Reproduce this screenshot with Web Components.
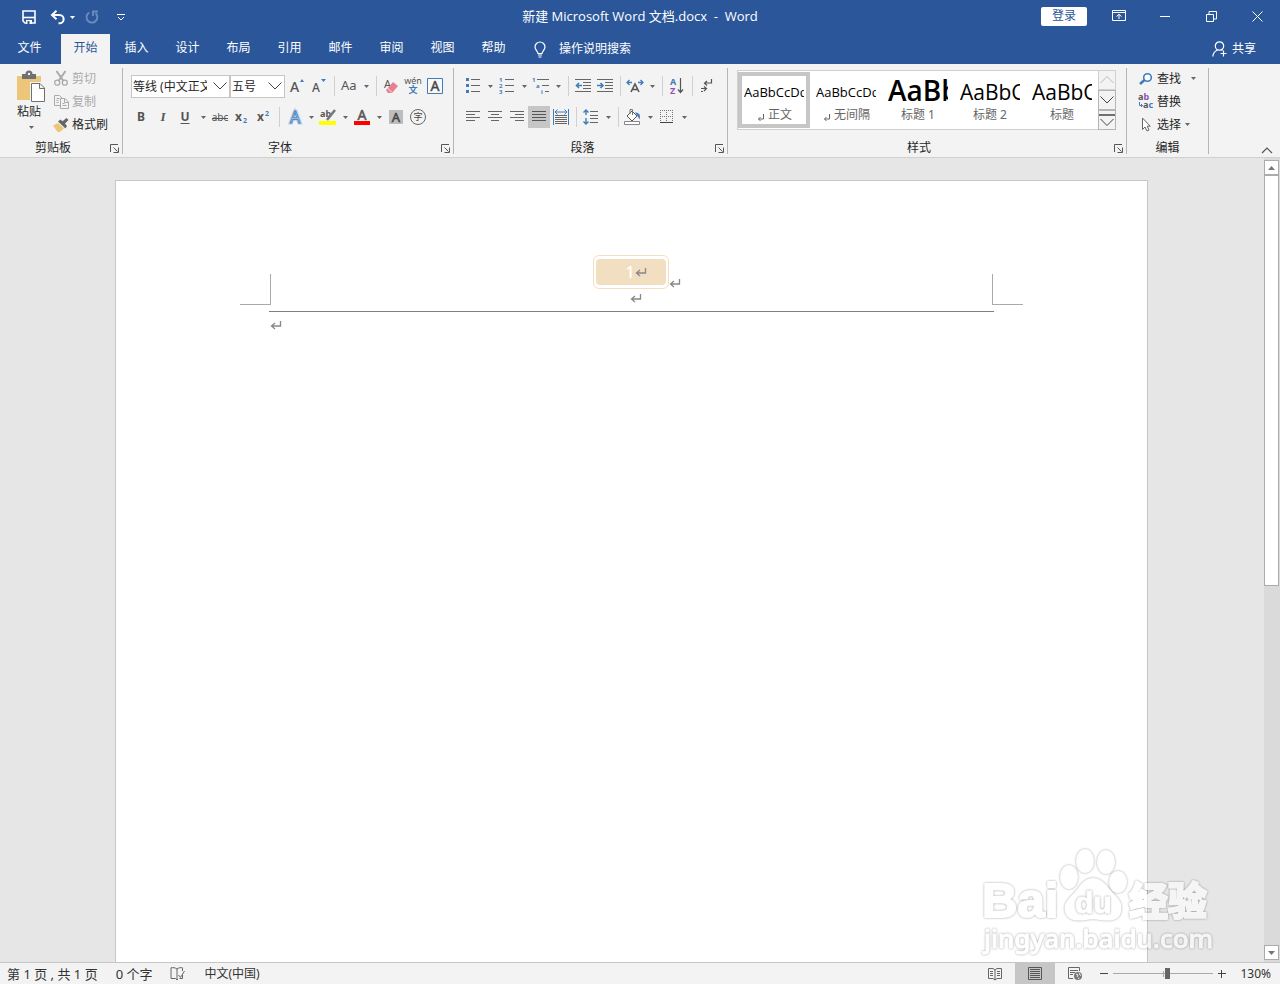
<!DOCTYPE html>
<html lang="zh-CN">
<head>
<meta charset="utf-8">
<title>新建 Microsoft Word 文档.docx - Word</title>
<style>
html, body { height: 100%; }
body { margin: 0; overflow: hidden; background: #e6e6e6; color: #262626; font: 12px/16px "Noto Sans", "Noto Sans CJK SC", sans-serif; }
</style>
</head>
<body>
<word-app></word-app>
<script>
const BASE = `
*, *::before { box-sizing: border-box; }
button, select, a { font: inherit; color: inherit; }
button { border: 0; background: none; padding: 0; margin: 0; white-space: nowrap; }
a { text-decoration: none; }
`;

function define(name, css, html) {
  customElements.define(name, class extends HTMLElement {
    constructor() { super(); this.attachShadow({ mode: 'open' }); }
    connectedCallback() {
      const tpl = document.createElement('template');
      tpl.innerHTML = `<style>${BASE}${css}</style>` + (typeof html === 'function' ? html(this) : html);
      this.shadowRoot.replaceChildren(tpl.content.cloneNode(true));
    }
  });
}

const G = '#666', B = '#3f7cba';
const lines = (rows, color = G) => rows.map(([x, y, w]) => `<path d="M${x} ${y}.5h${w}" stroke="${color}"/>`).join('');
const RETURN = `<path d="M10.5 1v5H2M5 3L1.5 6L5 9" stroke-width="1.3"/>`;

const ICONS = {
  save: [14, 14, `<path d="M1 1h12v12H3L1 11z" stroke="#fff" stroke-width="1.6"/><path d="M1 7.5h12" stroke="#fff" stroke-width="1.6"/><path d="M4 10h6v4H4z" fill="#fff" stroke="none"/><path d="M5.5 11h2v3h-2z" fill="#2b579a" stroke="none"/>`],
  undo: [16, 14, `<path d="M2 5h7.500a4 4 0 0 1 0 8.300h-1" stroke="#fff" stroke-width="2"/><path d="M6.500 .8L2 5l4.500 4.200" stroke="#fff" stroke-width="2"/>`],
  redo: [14, 14, `<path d="M4.300 2.500A5.400 5.400 0 1 0 10.500 3.200" stroke="#6c8cbe" stroke-width="1.900"/><path d="M8 6V1.500h5" stroke="#6c8cbe" stroke-width="1.900"/>`],
  custom: [10, 8, `<path d="M1 1.500h8M2 4l3 3l3-3" stroke="#fff"/>`],
  ribbonopt: [14, 12, `<path d="M.5 .5h13v10H.5zM.5 2.500h13M7 9V4.500M4.500 6.500L7 4.300l2.500 2.200" stroke="#fff"/>`],
  min: [10, 10, `<path d="M0 5.500h10" stroke="#fff"/>`],
  restore: [11, 11, `<path d="M.5 3.500h7v7h-7zM3 3V.5h7.500V8H8" stroke="#fff"/>`],
  close: [11, 11, `<path d="M.5 .5l10 10M10.500 .5l-10 10" stroke="#fff"/>`],
  bulb: [12, 17, `<path d="M4 12.500c0-2-3-3.500-3-6.500a5 5 0 0 1 10 0c0 3-3 4.500-3 6.500zM4 14h4M4.500 16h3" stroke="#fff" stroke-width="1.200"/>`],
  person: [16, 16, `<circle cx="7.500" cy="5" r="4.200" stroke="#fff" stroke-width="1.200"/><path d="M.8 15.500c.3-3.500 2.200-5.500 4.700-6.500M9.500 9l1 .6M11.500 9.500v6M8.500 12.500h6" stroke="#fff" stroke-width="1.200"/>`],
  caret: [5, 3, `<path d="M0 0h5L2.500 3z" fill="${G}" stroke="none"/>`],
  caretw: [5, 3, `<path d="M0 0h5L2.500 3z" fill="#fff" stroke="none"/>`],
  chevron: [14, 8, `<path d="M.5 .5L7 7L13.500 .5" stroke="#444"/>`],
  launch: [9, 9, `<path d="M.5 8V.5H8M3.500 3.500l4 4M8.500 3.500v5h-5" stroke="#555"/>`],
  collapse: [12, 7, `<path d="M1 6l5-5l5 5" stroke="#555" stroke-width="1.200"/>`],
  paste: [28, 32, `<path d="M0 5h24v24H0z" fill="#ecc77b" stroke="none"/><path d="M5 3h3.500a3.500 3.500 0 0 1 7 0H19v5H5z" fill="#707070" stroke="none"/><circle cx="12" cy="3" r="1.200" fill="#f3f3f3" stroke="none"/><path d="M13 11h12l3 3v18H13z" fill="#f3f3f3" stroke="none"/><path d="M14.500 12.500h8.500l4.500 4.500v13.500h-13zM22.500 12.500v5h5" fill="#fff" stroke="#707070"/>`],
  cut: [14, 15, `<path d="M2.500 0L9.500 10M11.500 0L4.500 10" stroke="#aaa" stroke-width="2"/><circle cx="3.200" cy="11.700" r="2.500" stroke="#aaa" stroke-width="1.300"/><circle cx="10.800" cy="11.700" r="2.500" stroke="#aaa" stroke-width="1.300"/>`],
  copy: [15, 14, `<path d="M6 10.500H.5V.5h5l3 3M2.500 3.500h3M2.500 5.500h2M2.500 7.500h2M6.500 3.500h4.500l3.500 3.500v6.500h-8zM10.500 3.500v4h4M8.500 8.500h2M8.500 10.500h4" stroke="#aaa"/>`],
  brush: [16, 14, `<path d="M0 7.500L5 5l6 5.500L7 14H4.500z" fill="#ecc77b" stroke="none"/><path d="M5 3.500l7.500 7L14 8L12 5.500L15.500 2L13.500 0L9.500 3.200L7.500 1.500z" fill="#666" stroke="none"/>`],
  grow: [16, 16, `<text x="1" y="14" font-size="14" stroke="none" fill="#555" font-weight="500">A</text><path d="M10 4l2-3l2 3z" fill="${B}" stroke="none" transform="translate(1 0)"/>`],
  shrink: [16, 16, `<text x="1" y="14" font-size="12" stroke="none" fill="#555" font-weight="500">A</text><path d="M10 1h5l-2.500 3z" fill="${B}" stroke="none"/>`],
  aa: [18, 14, `<text x="1" y="11" font-size="13" stroke="none" fill="#555">Aa</text>`],
  eraser: [16, 16, `<text x="1" y="10" font-size="11" stroke="none" fill="#555">A</text><path d="M10 4l5 4l-6 7H5l-2-3z" fill="#e78092" stroke="none"/><path d="M4 9.500l5 5" stroke="#f3f3f3"/>`],
  pinyin: [18, 18, `<text x="9" y="7" font-size="9" text-anchor="middle" stroke="none" fill="#555">wén</text><text x="9" y="16" font-size="9" text-anchor="middle" stroke="none" fill="${B}" font-weight="bold">文</text>`],
  abox: [16, 16, `<path d="M.5 .5h15v15H.5z" stroke="${B}" fill="#f8f8f8"/><text x="8" y="13" font-size="14" text-anchor="middle" fill="#444" stroke="#444" stroke-width=".4">A</text>`],
  bold: [12, 14, `<text x="5" y="11" font-size="12" font-weight="bold" text-anchor="middle" stroke="none" fill="#555">B</text>`],
  italic: [12, 14, `<text x="5" y="11" font-size="13" font-style="italic" font-weight="bold" font-family="Liberation Serif" text-anchor="middle" stroke="none" fill="#555">I</text>`],
  under: [12, 14, `<text x="5" y="11" font-size="12" font-weight="bold" text-anchor="middle" stroke="none" fill="#555">U</text><path d="M.5 13.500h9" stroke="#555"/>`],
  strike: [18, 14, `<text x="9" y="11" font-size="10" text-anchor="middle" stroke="none" fill="#555">abc</text><path d="M1 8.500h16" stroke="#555"/>`],
  sub: [14, 14, `<text x="0" y="11" font-size="12" font-weight="bold" stroke="none" fill="#555">x</text><text x="8" y="13" font-size="7" font-weight="bold" stroke="none" fill="${B}">2</text>`],
  sup: [14, 14, `<text x="0" y="11" font-size="12" font-weight="bold" stroke="none" fill="#555">x</text><text x="8" y="6" font-size="7" font-weight="bold" stroke="none" fill="${B}">2</text>`],
  effect: [16, 16, `<text x="9" y="14" font-size="16" text-anchor="middle" fill="#fff" stroke="#b9d4ee" stroke-width="3">A</text><text x="9" y="14" font-size="16" text-anchor="middle" fill="#fff" stroke="${B}" stroke-width=".8">A</text>`],
  mark: [18, 17, `<text x="1" y="8" font-size="9" font-weight="bold" stroke="none" fill="#555">ab</text><path d="M16 1L8 11" stroke="#777" stroke-width="2.500"/><path d="M0 12h17v4H0z" fill="#ff0" stroke="none"/>`],
  color: [16, 17, `<text x="8" y="11" font-size="14" text-anchor="middle" fill="#555" stroke="#555" stroke-width=".5">A</text><path d="M0 12h16v4H0z" fill="#f00" stroke="none"/>`],
  shade: [14, 14, `<path d="M0 0h14v14H0z" fill="#bdbdbd" stroke="none"/><text x="7" y="12" font-size="13" text-anchor="middle" fill="#444" stroke="#444" stroke-width=".5">A</text>`],
  ring: [16, 16, `<circle cx="8" cy="8" r="7.500" stroke="#666"/><text x="8" y="11" font-size="9" text-anchor="middle" stroke="none" fill="#444">字</text>`],
  bullets: [16, 16, `<path d="M1 0h3v3H1zM1 6h3v3H1zM1 12h3v3H1z" fill="${B}" stroke="none"/>` + lines([[6, 1, 9], [6, 7, 9], [6, 13, 9]])],
  numbers: [16, 16, `<g font-size="6" font-weight="bold" stroke="none" fill="${B}"><text x="0" y="4">1</text><text x="0" y="10">2</text><text x="0" y="16">3</text></g>` + lines([[6, 1, 9], [6, 7, 9], [6, 13, 9]])],
  multi: [18, 16, `<g font-size="6" font-weight="bold" stroke="none" fill="${B}"><text x="0" y="4">1</text><text x="4" y="10">a</text><text x="9" y="16">i</text></g>` + lines([[5, 1, 12], [10, 7, 7], [13, 13, 4]])],
  outdent: [16, 14, lines([[0, 0, 16], [8, 3, 8], [8, 6, 8], [8, 9, 8], [0, 12, 16]]) + `<path d="M7 6.500H1.500M4 4L1.500 6.500L4 9" stroke="${B}" stroke-width="1.600"/>`],
  indent: [16, 14, lines([[0, 0, 16], [8, 3, 8], [8, 6, 8], [8, 9, 8], [0, 12, 16]]) + `<path d="M0 6.500h6M3.500 4L6 6.500L3.500 9" stroke="${B}" stroke-width="1.600"/>`],
  cjk: [18, 14, `<path d="M5 13L9 5l4 8M6.500 10.500h5" stroke="#555" stroke-width="1.600"/><path d="M6 3.500H1M3.500 1L1 3.500L3.500 6M12 3.500h5M14.500 1L17 3.500L14.500 6" stroke="${B}" stroke-width="1.300"/>`],
  sort: [14, 16, `<text x="0" y="7" font-size="9" font-weight="bold" stroke="none" fill="${B}">A</text><text x="0" y="16" font-size="9" font-weight="bold" stroke="none" fill="#9152b0">Z</text><path d="M10.500 0v14M8 11.500l2.500 3l2.500-3" stroke="#555" stroke-width="1.200"/>`],
  marks: [12, 14, `<path d="M10.500 0v4H4M6 2L3.500 4.200L6 6.500M5 9.500H0M3 7.500l2.500 2L3 12M0 12.500h2" stroke="#555" stroke-width="1.200"/>`],
  left: [14, 12, lines([[0, 0, 14], [0, 3, 9], [0, 6, 14], [0, 9, 9]])],
  center: [14, 12, lines([[0, 0, 14], [3, 3, 8], [0, 6, 14], [3, 9, 8]])],
  right: [14, 12, lines([[0, 0, 14], [5, 3, 9], [0, 6, 14], [5, 9, 9]])],
  justify: [14, 12, lines([[0, 0, 14], [0, 3, 14], [0, 6, 14], [0, 9, 14]], '#555')],
  distribute: [16, 16, `<path d="M.5 0v16M15.500 0v16M2 3h12M4.500 .5L2 3l2.500 2.500M11.500 .5L14 3l-2.500 2.500" stroke="${B}"/>` + lines([[2, 6, 12], [2, 8, 12], [2, 10, 12], [2, 12, 12], [2, 14, 12]])],
  spacing: [16, 16, `<path d="M3 1v5M.5 3.500L3 1l2.500 2.500M3 9v6M.5 12.500L3 15l2.500-2.500" stroke="${B}" stroke-width="1.400"/>` + lines([[7, 2, 8], [7, 6, 8], [7, 9, 8], [7, 13, 8]])],
  bucket: [18, 16, `<path d="M3 7l5-5l5 5l-5 5z" fill="#fff" stroke="#555"/><path d="M6 5V.5h2.500V6" stroke="#777"/><path d="M11 3.500c4 0 6 2 4.500 7l-2-3.500z" fill="${B}" stroke="none"/><path d="M.5 12.500h15v3H.5z" fill="#fff" stroke="#888"/>`],
  borders: [14, 14, `<path d="M.5 0v13M6.500 0v13M12.500 0v13M0 .5h13M0 6.500h13" stroke="#777" stroke-dasharray="1 1"/><path d="M0 12.500h13" stroke="#444"/>`],
  find: [14, 12, `<circle cx="8.500" cy="4.500" r="3.800" stroke="${B}" stroke-width="1.600" fill="#fff"/><path d="M5.500 7L1 11" stroke="${B}" stroke-width="2.400"/>`],
  replace: [16, 17, `<text x="0" y="7" font-size="9" font-weight="bold" stroke="none" fill="#555">a<tspan fill="#9152b0">b</tspan></text><text x="5" y="15" font-size="9" font-weight="bold" stroke="none" fill="#555">a<tspan fill="${B}">c</tspan></text><path d="M1.500 9v3.500h3M3 11l1.500 1.500L3 14" stroke="${B}"/>`],
  select: [10, 15, `<path d="M1.500 1v11.500l2.500-2.500l2 4l2-1l-1.800-3.800h3z" stroke="#666" fill="#fff"/>`],
  sup1: [10, 7, `<path d="M7.500 0v5H2.500M4.500 3L2.500 5L4.500 7" stroke="#666"/>`],
  ret: [12, 10, `<g stroke="#888">${RETURN}</g>`],
  proof: [16, 14, `<path d="M7 12.500V2C5 .5 3 .5 1 .8v10.700h4.500L7 13l1-1M7 2C9 .5 11 .5 12.500 .8V4M8.500 8l2 2.500L14.500 4" stroke="#666"/><path d="M12.500 8v3.500h-3" stroke="#666"/>`],
  read: [14, 14, `<path d="M.5 1.500h4.500L7 3l2-1.500h4.500v10H9L7 13l-2-1.500H.5zM7 3v10M2 4.500h3M2 6.500h3M2 8.500h3M9 4.500h3M9 6.500h3M9 8.500h3" stroke="#666"/>`],
  print: [14, 13, `<path d="M.5 .5h13v12H.5zM2 2.500h10M2 4.500h10M2 6.500h10M2 8.500h10M2 10.500h10" stroke="#555"/>`],
  web: [15, 14, `<path d="M5 11.500H.5V.5h11V4M2 3.500h8M2 5.500h5M2 7.500h3" stroke="#666"/><circle cx="10" cy="9" r="4" fill="#777" stroke="none"/><path d="M8 7l2 1l-1 2M11 6l1 2l1 .5M10.500 12l.5-1.500" stroke="#f3f3f3"/>`],
  minus: [10, 10, `<path d="M1 4.500h8" stroke="#444"/>`],
  plus: [10, 10, `<path d="M1 4.500h8M4.500 1v8" stroke="#444"/>`],
  up: [7, 4, `<path d="M0 4h7L3.500 0z" fill="#777" stroke="none"/>`],
  down: [7, 4, `<path d="M0 0h7L3.500 4z" fill="#777" stroke="none"/>`],
  gup: [14, 8, `<path d="M.5 7L7 .5L13.500 7" stroke="#bbb"/>`],
  gmore: [16, 13, `<path d="M0 1h16" stroke="#444" stroke-width="1.500"/><path d="M1.500 5L8 11.500L14.500 5" stroke="#444"/>`]
};

define('w-icon', `:host { display: block; flex: none; } svg { display: block; overflow: visible; font-family: "Noto Sans", "Noto Sans CJK SC", sans-serif; }`, el => {
  const [w, h, art] = ICONS[el.getAttribute('name')];
  return `<svg width="${w}" height="${h}" viewBox="0 0 ${w} ${h}" fill="none" aria-hidden="true">${art}</svg>`;
});

/* Square tool button; "menu" adds a drop-down arrow, "on" shows it pressed. */
define('w-tool', `
:host { display: flex; height: 22px; }
button { display: grid; place-items: center; width: 22px; height: 22px; }
button.menu { width: 12px; }
:host([on]) button { background: #c6c6c6; }
`, el => `<button aria-label="${el.getAttribute('label')}"><w-icon name="${el.getAttribute('icon')}"></w-icon></button>` +
  (el.hasAttribute('menu') ? `<button class="menu" aria-label="${el.getAttribute('label')}选项"><w-icon name="caret"></w-icon></button>` : ''));

define('w-sep', `:host { display: block; width: 8px; height: 20px; } i { display: block; width: 1px; height: 100%; margin: 0 auto; background: #d0d0d0; }`, `<i></i>`);

define('w-command', `
:host { display: block; }
button { display: flex; align-items: center; height: 23px; }
span { display: grid; place-items: center; width: 22px; }
:host([disabled]) button { color: #aaa; }
.arrow { margin-left: 4px; }
:host([wide]) .arrow { margin-left: 10px; }
`, el => `<button ${el.hasAttribute('disabled') ? 'disabled' : ''}><span><w-icon name="${el.getAttribute('icon')}"></w-icon></span><slot></slot>${el.hasAttribute('menu') ? '<w-icon class="arrow" name="caret"></w-icon>' : ''}</button>`);

define('w-combo', `
:host { display: grid; height: 23px; align-items: center; }
select { grid-area: 1 / 1; width: 100%; height: 23px; appearance: none; background: #fff; border: 1px solid #c6c6c6; border-radius: 0; padding: 2px 22px 0 1px; margin: 0; color: #262626; text-overflow: clip; }
w-icon { grid-area: 1 / 1; justify-self: end; margin-right: 3px; pointer-events: none; }
`, el => `<select aria-label="${el.getAttribute('label')}"><option>${el.getAttribute('value')}</option></select><w-icon name="chevron"></w-icon>`);

define('w-group', `
:host { display: flex; flex-direction: column; flex: none; padding: 0 0 0 8px; border-right: 1px solid #b5b5b5; height: 86px; margin-top: 4px; }
.body { flex: 1; padding-right: var(--end, 7px); }
footer { display: flex; height: 12px; margin-left: -8px; align-items: center; }
footer span { flex: 1; text-align: center; }
button { width: 16px; height: 12px; display: grid; place-items: center; }
`, el => `<div class="body"><slot></slot></div><footer><span>${el.getAttribute('label')}</span>${el.hasAttribute('plain') ? '' : `<button aria-label="${el.getAttribute('label')}设置"><w-icon name="launch"></w-icon></button>`}</footer>`);

define('w-style', `
:host { display: block; width: 72px; }
button { display: block; width: 72px; height: 56px; border: 4px solid transparent; padding: 0 2px; color: #666; }
:host([on]) button { border-color: #c6c6c6; }
b { display: block; height: 30px; font: 13px/32px "Open Sans", sans-serif; color: #000; overflow: hidden; text-align: left; width: 60px; }
:host([size="big"]) b { font-size: 21px; }
:host([size="huge"]) b { font-size: 28px; line-height: 28px; font-weight: 600; }
span { display: flex; justify-content: center; align-items: center; height: 18px; gap: 2px; }
w-icon { margin-top: 4px; }
`, el => `<button><b>${el.getAttribute('sample')}</b><span>${el.hasAttribute('mark') ? '<w-icon name="sup1"></w-icon>' : ''}<slot></slot></span></button>`);

define('word-titlebar', `
:host { display: grid; grid-template-columns: 1fr auto 1fr; height: 30px; background: #2b579a; color: #fff; align-items: center; }
.quick { display: flex; align-items: center; padding: 2px 0 0 21px; }
.quick button, .win button { display: grid; place-items: center; height: 30px; }
.save { width: 15px; margin-right: 8px; }
.undo { width: 28px; margin-right: -6px; }
.list { width: 12px; }
.redo { width: 28px; }
.more { width: 30px; }
.win { display: flex; justify-content: flex-end; align-items: center; }
.win button { width: 46px; }
.win .login { height: 19px; background: #fff; color: #2b579a; border-radius: 2px; margin-right: 9px; }
.name { white-space: pre; font: 13px/18px "Open Sans", "Noto Sans CJK SC", sans-serif; }
`, `<div class="quick"><button class="save" aria-label="保存"><w-icon name="save"></w-icon></button><button class="undo" aria-label="撤消"><w-icon name="undo"></w-icon></button><button class="list" aria-label="撤消选项"><w-icon name="caretw"></w-icon></button><button class="redo" aria-label="恢复"><w-icon name="redo"></w-icon></button><button class="more" aria-label="自定义快速访问工具栏"><w-icon name="custom"></w-icon></button></div>
<div class="name">新建 Microsoft Word 文档.docx  -  Word</div>
<div class="win"><button class="login">登录</button><button aria-label="功能区显示选项"><w-icon name="ribbonopt"></w-icon></button><button aria-label="最小化"><w-icon name="min"></w-icon></button><button aria-label="还原"><w-icon name="restore"></w-icon></button><button aria-label="关闭"><w-icon name="close"></w-icon></button></div>`);

define('word-tabs', `
:host { display: flex; height: 34px; padding-top: 4px; background: #2b579a; color: #fff; }
nav { display: flex; gap: 2px; }
a { width: 49px; height: 30px; line-height: 28px; text-align: center; }
a:first-child { width: 59px; }
.on { background: #f3f3f3; color: #2b579a; }
.search, .share { display: flex; align-items: center; height: 30px; }
.search { gap: 13px; margin-left: 16px; }
.share { gap: 4px; margin-left: auto; padding-right: 24px; }
`, `<nav><a href="#file">文件</a><a href="#home" class="on">开始</a>${['插入', '设计', '布局', '引用', '邮件', '审阅', '视图', '帮助'].map(t => `<a href="#tab">${t}</a>`).join('')}</nav>
<button class="search"><w-icon name="bulb"></w-icon>操作说明搜索</button>
<button class="share"><w-icon name="person"></w-icon>共享</button>`);

define('word-ribbon', `
:host { display: flex; height: 94px; background: #f3f3f3; border-bottom: 1px solid #d0d0d0; }
.row { display: flex; align-items: center; height: 24px; margin-top: 6px; }
.row + .row { height: 24px; margin-top: 7px; }
.family { width: 99px; } .size { width: 55px; margin-right: 1px; }
.clip { display: flex; width: 107px; }
.commands { margin-top: -1px; }
.paste { display: flex; flex-direction: column; align-items: center; gap: 1px; padding-top: 3px; width: 42px; }
.paste w-icon { margin-left: 4px; }
.paste w-icon + w-icon { margin-top: 5px; }
.gallery { display: flex; height: 60px; border: 1px solid #d0d0d0; background: #fff; padding: 1px 0; margin: 2px 0 0 1px; }
.spin { display: flex; flex-direction: column; width: 18px; margin: -2px -1px -2px 0; background: #f3f3f3; }
.spin button { flex: 1; display: grid; place-items: center; border: 1px solid #b5b5b5; }
.spin button:first-child { border-color: #d0d0d0; }
.end { flex: 1; display: flex; justify-content: flex-end; align-items: flex-end; padding: 0 7px 3px 0; }
`, `<w-group label="剪贴板"><div class="clip"><button class="paste"><w-icon name="paste"></w-icon>粘贴<w-icon name="caret"></w-icon></button>
<div class="commands"><w-command icon="cut" disabled>剪切</w-command><w-command icon="copy" disabled>复制</w-command><w-command icon="brush">格式刷</w-command></div></div></w-group>
<w-group label="字体"><div class="row"><w-combo class="family" label="字体" value="等线 (中文正文)"></w-combo><w-combo class="size" label="字号" value="五号"></w-combo>
<w-tool icon="grow" label="增大字号"></w-tool><w-tool icon="shrink" label="减小字号"></w-tool><w-sep></w-sep><w-tool icon="aa" label="更改大小写" menu></w-tool><w-sep></w-sep><w-tool icon="eraser" label="清除格式"></w-tool><w-tool icon="pinyin" label="拼音指南"></w-tool><w-tool icon="abox" label="字符边框"></w-tool></div>
<div class="row"><w-tool icon="bold" label="加粗"></w-tool><w-tool icon="italic" label="倾斜"></w-tool><w-tool icon="under" label="下划线" menu></w-tool><w-tool icon="strike" label="删除线"></w-tool><w-tool icon="sub" label="下标"></w-tool><w-tool icon="sup" label="上标"></w-tool><w-sep></w-sep><w-tool icon="effect" label="文本效果" menu></w-tool><w-tool icon="mark" label="突出显示" menu></w-tool><w-tool icon="color" label="字体颜色" menu></w-tool><w-tool icon="shade" label="字符底纹"></w-tool><w-tool icon="ring" label="带圈字符"></w-tool></div></w-group>
<w-group label="段落" style="--end:9px"><div class="row"><w-tool icon="bullets" label="项目符号" menu></w-tool><w-tool icon="numbers" label="编号" menu></w-tool><w-tool icon="multi" label="多级列表" menu></w-tool><w-sep></w-sep><w-tool icon="outdent" label="减少缩进"></w-tool><w-tool icon="indent" label="增加缩进"></w-tool><w-sep></w-sep><w-tool icon="cjk" label="中文版式" menu></w-tool><w-sep></w-sep><w-tool icon="sort" label="排序"></w-tool><w-sep></w-sep><w-tool icon="marks" label="显示编辑标记"></w-tool></div>
<div class="row"><w-tool icon="left" label="左对齐"></w-tool><w-tool icon="center" label="居中"></w-tool><w-tool icon="right" label="右对齐"></w-tool><w-tool icon="justify" label="两端对齐" on></w-tool><w-tool icon="distribute" label="分散对齐"></w-tool><w-sep></w-sep><w-tool icon="spacing" label="行距" menu></w-tool><w-sep></w-sep><w-tool icon="bucket" label="底纹" menu></w-tool><w-tool icon="borders" label="边框" menu></w-tool></div></w-group>
<w-group label="样式" style="--end:10px"><div class="gallery"><w-style sample="AaBbCcDd" mark on>正文</w-style><w-style sample="AaBbCcDd" mark>无间隔</w-style><w-style sample="AaBb" size="huge">标题 1</w-style><w-style sample="AaBbC" size="big">标题 2</w-style><w-style sample="AaBbC" size="big">标题</w-style>
<div class="spin"><button aria-label="上一行"><w-icon name="gup"></w-icon></button><button aria-label="下一行"><w-icon name="chevron"></w-icon></button><button aria-label="其他"><w-icon name="gmore"></w-icon></button></div></div></w-group>
<w-group label="编辑" plain style="--end:12px"><div class="commands"><w-command icon="find" menu wide>查找</w-command><w-command icon="replace">替换</w-command><w-command icon="select" menu>选择</w-command></div></w-group>
<div class="end"><button aria-label="折叠功能区"><w-icon name="collapse"></w-icon></button></div>`);

define('word-page', `
:host { display: block; width: 1033px; max-width: 100%; background: #fff; border: 1px solid #c6c6c6; border-bottom: 0; padding: 74px 124px 0; }
header { display: flex; justify-content: space-between; align-items: flex-end; height: 50px; }
.corner { width: 31px; height: 31px; border: 0 solid #aaa; border-bottom-width: 1px; }
.corner:first-child { border-right-width: 1px; } .corner:last-child { border-left-width: 1px; }
.center { align-self: flex-start; display: flex; flex-direction: column; align-items: center; gap: 4px; position: relative; }
.badge { width: 76px; height: 34px; border: 1px solid #f2dfc3; border-radius: 6px; padding: 3px 2px; }
.fill { display: flex; align-items: center; justify-content: center; height: 26px; padding-left: 10px; border-radius: 4px; background: #f2dec1; color: #fff; font-size: 16px; font-weight: 500; }
.after { position: absolute; left: 76px; top: 23px; }
.center > w-icon:last-child { margin-left: 10px; }
hr { border: 0; border-top: 1px solid #808080; margin: 6px 29px 8px; }
.body { padding-left: 30px; }
`, `<header><span class="corner"></span><div class="center"><div class="badge"><div class="fill">1<w-icon name="ret"></w-icon></div></div><w-icon class="after" name="ret"></w-icon><w-icon name="ret"></w-icon></div><span class="corner"></span></header><hr><div class="body"><w-icon name="ret"></w-icon></div>`);

define('word-scrollbar', `
:host { display: flex; flex-direction: column; width: 16px; padding: 2px 1px 2px 0; background: #dadada; }
button { height: 15px; flex: none; display: grid; place-items: center; background: #fff; border: 1px solid #ababab; }
.track { flex: 1; }
.thumb { height: 53.4%; background: #fff; border: 1px solid #ababab; }
`, `<button aria-label="向上滚动"><w-icon name="up"></w-icon></button><div class="track"><div class="thumb"></div></div><button aria-label="向下滚动"><w-icon name="down"></w-icon></button>`);

define('word-watermark', `
:host { position: absolute; right: 66px; bottom: 2px; pointer-events: none; opacity: .6; }
svg { display: block; overflow: visible; filter: drop-shadow(0 0 1px rgba(0, 0, 0, .6)); }
text { font-family: "Noto Sans", "Noto Sans CJK SC", sans-serif; fill: #fff; stroke: #fff; stroke-linejoin: round; }
.bai { font: bold 49px "Liberation Sans", Arial, sans-serif; stroke-width: 2px; }
.du { font: bold 30px "Liberation Sans", Arial, sans-serif; filter: drop-shadow(0 0 1px rgba(0, 0, 0, .6)); }
.jy { font-size: 39px; font-weight: 900; stroke-width: 2px; }
.url { font: 500 26px "Noto Sans", sans-serif; stroke-width: 1px; }
.paw { fill: #fff; stroke: none; }
`, `<svg width="232" height="114" viewBox="0 0 232 114" aria-hidden="true">
<g class="paw"><ellipse cx="87" cy="31" rx="9" ry="12"/><ellipse cx="103" cy="15" rx="9" ry="12"/><ellipse cx="124" cy="16" rx="9" ry="12"/><ellipse cx="136" cy="36" rx="9" ry="11"/>
<path d="M111 32c-10 0-13 9-19 15c-6 6-11 11-9 19c3 10 14 9 21 8c5-1 9-1 14 0c7 1 19 2 21-8c2-9-2-13-8-19c-6-6-10-15-20-15z"/></g>
<text class="bai" x="0" y="71">Bai</text><text class="du" x="93" y="67">du</text><text class="jy" x="147" y="69">经验</text><text class="url" x="2" y="102">jingyan.baidu.com</text></svg>`);

define('word-workspace', `
:host { display: flex; flex: 1; min-height: 0; background: #e6e6e6; position: relative; overflow: hidden; }
main { flex: 1; min-width: 0; display: flex; justify-content: center; align-items: stretch; padding: 22px 2px 0 0; overflow: hidden; }
`, `<main><word-page></word-page></main><word-scrollbar></word-scrollbar><word-watermark></word-watermark>`);

define('word-status', `
:host { display: flex; align-items: stretch; height: 22px; background: #f3f3f3; border-top: 1px solid #c6c6c6; line-height: 20px; color: #333; padding-left: 7px; }
.info { display: flex; gap: 18px; align-items: center; flex: 1; white-space: nowrap; }
.count { font-size: 13px; }
.view { display: flex; align-items: center; }
.view button { display: grid; place-items: center; height: 21px; width: 40px; }
.view .on { background: #c6c6c6; }
.view .step { width: 18px; }
input { appearance: none; width: 100px; height: 16px; margin: 0; background: linear-gradient(#aaa, #aaa) 0 50% / 100% 1px no-repeat, linear-gradient(#aaa, #aaa) 50% 50% / 1px 6px no-repeat; }
input::-webkit-slider-thumb { appearance: none; width: 5px; height: 11px; background: #666; border: 0; }
output { padding: 0 9px; }
`, `<div class="info"><span class="count">第 1 页 , 共 1 页</span><span class="count">0 个字</span><w-icon name="proof"></w-icon><span>中文(中国)</span></div>
<div class="view"><button aria-label="阅读视图"><w-icon name="read"></w-icon></button><button class="on" aria-label="页面视图"><w-icon name="print"></w-icon></button><button aria-label="Web 版式"><w-icon name="web"></w-icon></button><button class="step" aria-label="缩小"><w-icon name="minus"></w-icon></button><input type="range" aria-label="缩放" min="0" max="100" value="54"><button class="step" aria-label="放大"><w-icon name="plus"></w-icon></button><output>130%</output></div>`);

define('word-app', `:host { display: flex; flex-direction: column; height: 100vh; }`,
  `<word-titlebar></word-titlebar><word-tabs></word-tabs><word-ribbon></word-ribbon><word-workspace></word-workspace><word-status></word-status>`);
</script>
</body>
</html>
